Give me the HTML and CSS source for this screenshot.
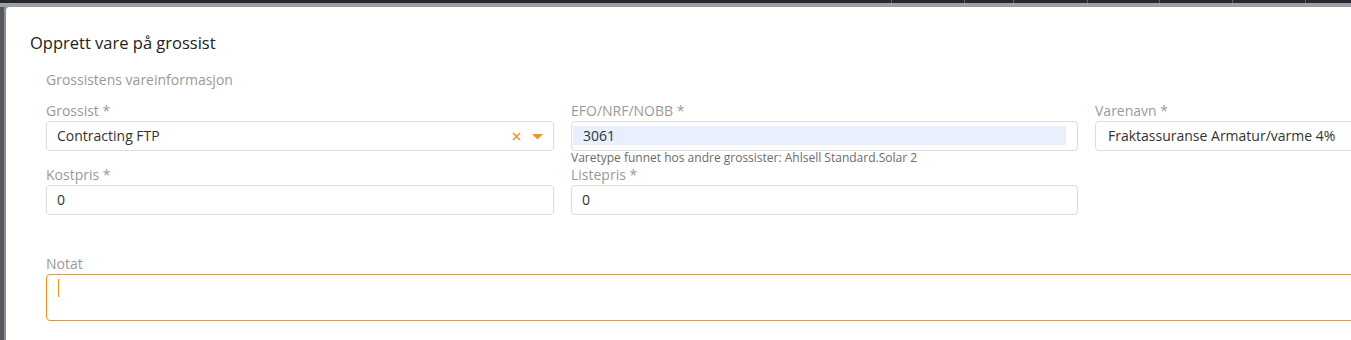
FILE: index.html
```html
<!DOCTYPE html>
<html lang="no">
<head>
    <meta charset="UTF-8">
    <meta name="viewport" content="width=device-width, initial-scale=1.0">
    <title>Opprett vare på grossist</title>
    <link rel="stylesheet" href="styles.css">
</head>
<body>
    <!-- Header strip behind the modal overlay -->
    <div class="topbar">
        <span class="topbar-fill"></span>
        <span class="topbar-cell w73"></span>
        <span class="topbar-cell w49"></span>
        <span class="topbar-cell w74"></span>
        <span class="topbar-cell w72"></span>
        <span class="topbar-cell w73"></span>
        <span class="topbar-cell w73"></span>
        <span class="topbar-cell rest"></span>
    </div>
    <div class="overlay-band"></div>

    <div class="screen">
        <div class="screen-edge"></div>

        <div class="modal">
            <h2 class="modal-title">Opprett vare på grossist</h2>

            <div class="section">
                <div class="section-title">Grossistens vareinformasjon</div>

                <div class="form-grid">
                    <div class="field">
                        <label class="field-label">Grossist *</label>
                        <div class="input select">
                            <span class="input-value">Contracting FTP</span>
                            <span class="select-icons">
                                <svg class="icon-clear" width="9" height="9" viewBox="0 0 9 9">
                                    <path d="M1 1 L8 8 M8 1 L1 8" stroke="#f7941d" stroke-width="1.6" fill="none"/>
                                </svg>
                                <svg class="icon-caret" width="11" height="6" viewBox="0 0 11 6">
                                    <path d="M0 0 H11 L5.5 5.5 Z" fill="#f7941d"/>
                                </svg>
                            </span>
                        </div>
                    </div>

                    <div class="field">
                        <label class="field-label">EFO/NRF/NOBB *</label>
                        <div class="input autofilled">
                            <span class="autofill">3061</span>
                        </div>
                        <div class="field-hint">Varetype funnet hos andre grossister: Ahlsell Standard.Solar 2</div>
                    </div>

                    <div class="field">
                        <label class="field-label">Varenavn *</label>
                        <div class="input">
                            <span class="input-value wide-pad">Fraktassuranse Armatur/varme 4%</span>
                        </div>
                    </div>

                    <div class="field">
                        <label class="field-label">Kostpris *</label>
                        <div class="input">
                            <span class="input-value">0</span>
                        </div>
                    </div>

                    <div class="field">
                        <label class="field-label">Listepris *</label>
                        <div class="input">
                            <span class="input-value">0</span>
                        </div>
                    </div>

                    <div class="field"></div>

                    <div class="field field-full">
                        <label class="field-label">Notat</label>
                        <div class="textarea focused">
                            <span class="caret"></span>
                        </div>
                    </div>
                </div>
            </div>
        </div>
    </div>
</body>
</html>
```

FILE: styles.css
```css
body {
    margin: 0;
    font-family: "Open Sans", Arial, sans-serif;
    color: #333;
    background-color: #fff;
    overflow: hidden;
    height: 340px;
}

/* Header behind the overlay */
.topbar {
    display: flex;
    height: 3px;
    background-color: #232930;
}

.topbar-fill {
    width: 891px;
}

.topbar-cell {
    border-left: 1px solid #5d6268;
}

.w73 { width: 72px; }
.w49 { width: 48px; }
.w74 { width: 73px; }
.w72 { width: 71px; }
.rest { flex: 1; }

.overlay-band {
    height: 4px;
    background-color: #a0a0a0;
}

.screen {
    display: flex;
    height: 333px;
    background-color: #a0a0a0;
}

.screen-edge {
    width: 6px;
    background: linear-gradient(to right, #55595e 0, #55595e 4px, #8e9092 4px, #8e9092 6px);
}

/* Modal */
.modal {
    flex: 1;
    background-color: #fff;
    border-top-left-radius: 4px;
    padding: 25px 0 0 24px;
    overflow: hidden;
}

.modal-title {
    margin: 0;
    font-size: 16.5px;
    font-weight: 400;
    line-height: 22px;
    color: #222;
    white-space: nowrap;
}

.section {
    padding-left: 16px;
    margin-top: 16px;
}

.section-title {
    font-size: 14px;
    line-height: 20px;
    color: #999;
    white-space: nowrap;
}

.form-grid {
    display: grid;
    grid-template-columns: 508px 507px 508px;
    column-gap: 17px;
    align-items: start;
    margin-top: 11px;
}

.field-full {
    grid-column: 1 / 4;
    margin-top: 39px;
}

.field-label {
    display: block;
    font-size: 14px;
    line-height: 20px;
    color: #9a9a9a;
    white-space: nowrap;
}

.input {
    display: flex;
    align-items: center;
    height: 30px;
    box-sizing: border-box;
    border: 1px solid #dcdcdc;
    border-radius: 4px;
    font-size: 14px;
    line-height: 28px;
    color: #333;
}

.input-value {
    padding-left: 10px;
    white-space: nowrap;
}

.input-value.wide-pad {
    padding-left: 12px;
}

.select {
    justify-content: space-between;
}

.select-icons {
    display: flex;
    align-items: center;
    gap: 11px;
    padding-right: 10px;
}

.icon-caret {
    margin-top: 1px;
}

.autofilled {
    align-items: stretch;
    padding: 4px 11px 5px 1px;
}

.autofill {
    flex: 1;
    background-color: #e8f0fe;
    padding-left: 10px;
    line-height: 19px;
}

.field-hint {
    font-size: 12px;
    line-height: 14px;
    color: #6b6b6b;
    white-space: nowrap;
}

.textarea {
    height: 47px;
    box-sizing: border-box;
    border: 1px solid #dcdcdc;
    border-radius: 4px;
    padding: 4px 11px;
}

.textarea.focused {
    border-color: #f7941d;
}

.caret {
    display: block;
    width: 1px;
    height: 18px;
    background-color: #f7941d;
}
```
